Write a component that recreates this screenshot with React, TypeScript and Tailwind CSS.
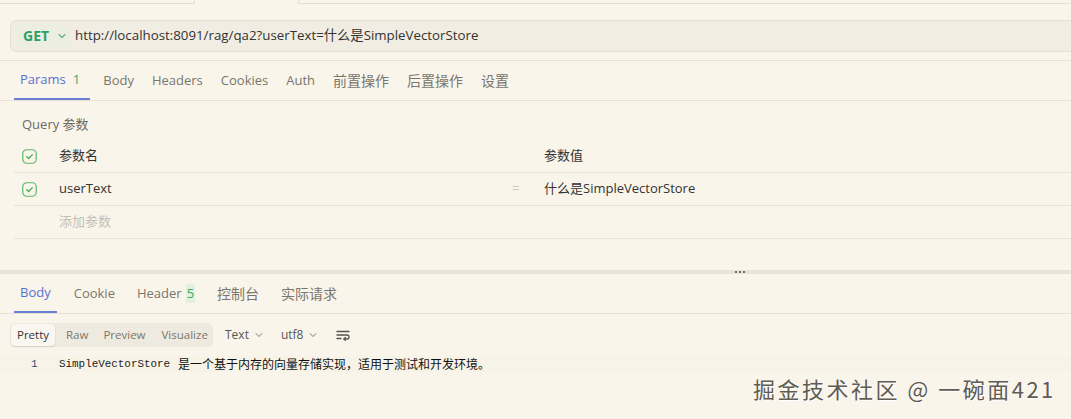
import React from 'react';

const CheckBox = () => (
  <svg width="15" height="15" viewBox="0 0 15 15" className="shrink-0">
    <rect x="0.75" y="0.75" width="13.5" height="13.5" rx="4" fill="none" stroke="#5cb76c" strokeWidth="1.2" />
    <path d="M4.6 7.6 L6.6 9.5 L10.4 5.6" fill="none" stroke="#4aa85c" strokeWidth="1.3" strokeLinecap="round" strokeLinejoin="round" />
  </svg>
);

const Chevron = ({ color = '#9a968c' }: { color?: string }) => (
  <svg width="8" height="6" viewBox="0 0 8 6" className="shrink-0">
    <path d="M1 1.5 L4 4.5 L7 1.5" fill="none" stroke={color} strokeWidth="1.1" strokeLinecap="round" strokeLinejoin="round" />
  </svg>
);

const WrapIcon = () => (
  <svg width="14" height="12" viewBox="0 0 14 12">
    <path d="M1 2.5 H13" stroke="#55524b" strokeWidth="1.3" strokeLinecap="round" />
    <path d="M1 6 H11 A2 2 0 0 1 11 10 H8" fill="none" stroke="#55524b" strokeWidth="1.3" strokeLinecap="round" />
    <path d="M9.4 8.5 L7.9 10 L9.4 11.4" fill="none" stroke="#55524b" strokeWidth="1.2" strokeLinecap="round" strokeLinejoin="round" />
    <path d="M1 9.5 H5" stroke="#55524b" strokeWidth="1.3" strokeLinecap="round" />
  </svg>
);

const isCjk = (s: string) => /[\u4e00-\u9fff]/.test(s);

const App = () => {
  const reqTabs = ['Body', 'Headers', 'Cookies', 'Auth', '前置操作', '后置操作', '设置'];
  const resTabs = ['Cookie', 'Header', '控制台', '实际请求'];

  return (
    <div
      className="relative w-[1071px] h-[419px] overflow-hidden bg-[#f9f5ea] text-[#333]"
      style={{ fontFamily: '"Open Sans", "Noto Sans CJK SC", sans-serif' }}
    >
      {/* top tab remnants */}
      <div className="flex h-[4px]">
        <div className="w-[195px] border-b border-r border-[#e4dfd2]" />
        <div className="w-[103px]" />
        <div className="flex-1 border-b border-l border-[#e4dfd2]" />
      </div>

      {/* url bar */}
      <div className="pl-[10px] pt-[16px] pb-[8px] border-b border-[#e6e1d4]">
        <div className="flex items-center h-[32px] rounded-l-[7px] border border-r-0 border-[#e4dfd2] bg-[#f1ede2] pl-[4px]">
          <div className="flex items-center gap-[9px] h-[24px] w-[55px] rounded-[5px] bg-[#ecefdf] pl-[8px]">
            <span className="text-[14px] font-bold text-[#2e9f68] leading-none">GET</span>
            <Chevron color="#58b387" />
          </div>
          <span className="ml-[5px] text-[13.3px] text-[#333]">http://localhost:8091/rag/qa2?userText=什么是SimpleVectorStore</span>
        </div>
      </div>

      {/* request tabs */}
      <div className="flex items-end h-[40px] pl-[14px] border-b border-[#e6e1d4] text-[13px]">
        <div className="flex items-center h-full pl-[6px] pr-[10px] border-b-[2px] border-[#6a7fd8] text-[#5b6fd1]">
          Params<span className="ml-[7px] text-[#3aa86b]">1</span>
        </div>
        {reqTabs.map((t) => (
          <div
            key={t}
            className={`flex items-center h-full ml-[8px] px-[5px] text-[#7a766d] ${isCjk(t) ? 'text-[14px]' : ''}`}
          >
            {t}
          </div>
        ))}
      </div>

      {/* query params */}
      <div className="pl-[14px]">
        <div className="h-[39px] flex items-end pb-[6px] pl-[8px] text-[13px] text-[#6e6a62]">Query 参数</div>
        <div className="flex items-center h-[33px] border-b border-[#e8e3d6] text-[13px]">
          <div className="w-[45px] pl-[8px]"><CheckBox /></div>
          <div className="w-[485px]">参数名</div>
          <div>参数值</div>
        </div>
        <div className="flex items-center h-[33px] border-b border-[#e8e3d6] text-[13px]">
          <div className="w-[45px] pl-[8px]"><CheckBox /></div>
          <div className="w-[453px]">userText</div>
          <div className="w-[32px] text-[#cdc8bb]">=</div>
          <div>什么是SimpleVectorStore</div>
        </div>
        <div className="flex items-center h-[33px] border-b border-[#e8e3d6] text-[13px]">
          <div className="w-[45px]" />
          <div className="text-[#c4c0b6]">添加参数</div>
        </div>
      </div>

      {/* resize divider */}
      <div className="relative mt-[31px] h-[4px] bg-[#e8e3d6]">
        <div className="absolute left-[735px] top-[1px] flex gap-[2px]">
          <span className="w-[2px] h-[2px] bg-[#6e6a62]" />
          <span className="w-[2px] h-[2px] bg-[#6e6a62]" />
          <span className="w-[2px] h-[2px] bg-[#6e6a62]" />
        </div>
      </div>

      {/* response tabs */}
      <div className="flex items-end h-[40px] pl-[14px] border-b border-[#e6e1d4] text-[13px]">
        <div className="flex items-center h-full px-[6px] border-b-[2px] border-[#6a7fd8] text-[#5b6fd1]">Body</div>
        {resTabs.map((t) => (
          <div
            key={t}
            className={`flex items-center h-full ml-[12px] px-[5px] text-[#7a766d] ${isCjk(t) ? 'text-[14px]' : ''}`}
          >
            {t}
            {t === 'Header' && <span className="ml-[4px] text-[#3aa86b] bg-[#e4efdc] px-[1px]">5</span>}
          </div>
        ))}
      </div>

      {/* response toolbar */}
      <div className="flex items-center pl-[10px] pt-[9px] text-[11.5px]">
        <div className="flex items-center h-[24px] w-[203px] rounded-[5px] bg-[#efeadf] p-[1px]">
          <div className="flex items-center justify-center h-full w-[44px] rounded-[4px] bg-[#faf7f0] shadow-[0_1px_2px_rgba(0,0,0,0.12)] text-[#333]">Pretty</div>
          <div className="ml-[11px] text-[#7a766d]">Raw</div>
          <div className="ml-[15px] text-[#7a766d]">Preview</div>
          <div className="ml-[16px] text-[#7a766d]">Visualize</div>
        </div>
        <div className="flex items-center gap-[6px] ml-[12px] text-[12px] text-[#555]">
          Text<Chevron color="#b5b0a5" />
        </div>
        <div className="flex items-center gap-[6px] ml-[18px] text-[12px] text-[#555]">
          utf8<Chevron color="#b5b0a5" />
        </div>
        <div className="ml-[19px] flex items-center">
          <WrapIcon />
        </div>
      </div>

      {/* response content */}
      <div className="flex items-center h-[16px] mt-[9px] bg-[#f7f3e7]">
        <span className="w-[59px] pl-[31px] text-[11px] text-[#2c4a7a]" style={{ fontFamily: '"Liberation Mono", monospace' }}>1</span>
        <span className="text-[10.9px] text-[#222]" style={{ fontFamily: '"Liberation Mono", monospace' }}>SimpleVectorStore</span>
        <span className="ml-[8px] text-[12px] text-[#111]" style={{ fontFamily: '"Noto Sans CJK SC", sans-serif' }}>是一个基于内存的向量存储实现，适用于测试和开发环境。</span>
      </div>

      {/* watermark */}
      <div
        className="absolute left-[753px] top-[372px] text-[22px] text-[#5f5c55] tracking-[2.5px] [text-shadow:1px_1px_0_#ffffff]"
        style={{ fontFamily: '"Noto Sans CJK SC", sans-serif' }}
      >
        掘金技术社区 @ 一碗面421
      </div>
    </div>
  );
};

export default App;
